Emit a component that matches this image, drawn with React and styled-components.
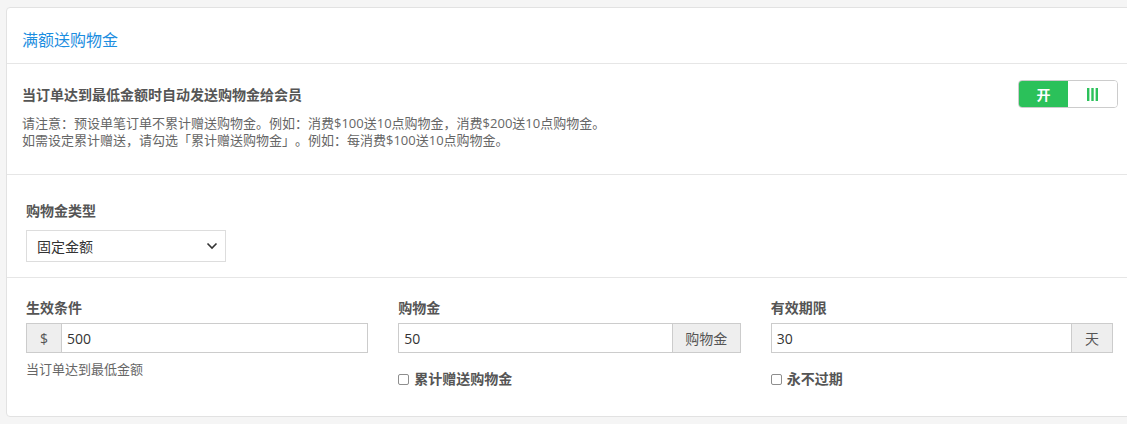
import React from "react";
import styled, { createGlobalStyle } from "styled-components";

const GlobalStyle = createGlobalStyle`
  html, body {
    margin: 0;
    padding: 0;
    background: #f5f5f5;
    overflow: hidden;
  }
  body {
    font-family: "Open Sans", "Noto Sans CJK SC", sans-serif;
    color: #333;
    text-spacing-trim: space-all;
  }
`;

const Page = styled.div`
  padding: 7px 0 0 6px;
  width: 1134px;
  height: 424px;
  box-sizing: border-box;
`;

const Card = styled.div`
  background: #fff;
  border: 1px solid #e2e2e2;
  border-radius: 4px;
  width: 1128px;
  box-sizing: border-box;
`;

const Header = styled.div`
  padding: 22px 15px 13px;
  border-bottom: 1px solid #e6e6e6;
`;

const Title = styled.h2`
  margin: 0;
  font-size: 16px;
  line-height: 20px;
  font-weight: 400;
  color: #1b8de0;
`;

const Section = styled.div`
  padding: ${(p) => p.pad || "20px 20px 16px 19px"};
  border-bottom: ${(p) => (p.last ? "none" : "1px solid #e6e6e6")};
`;

const Row = styled.div`
  display: flex;
  justify-content: space-between;
  align-items: flex-start;
`;

const SettingTitle = styled.div`
  font-size: 14px;
  line-height: 18px;
  font-weight: 700;
  color: #555;
  margin-top: 6px;
`;

const Note = styled.p`
  margin: 11px 0 0;
  font-size: 13px;
  line-height: 17px;
  color: #666;
`;

const Toggle = styled.div`
  display: flex;
  width: 100px;
  height: 28px;
  border: 1px solid #ccc;
  border-radius: 4px;
  overflow: hidden;
  box-sizing: border-box;
`;

const ToggleHalf = styled.div`
  flex: 1;
  display: flex;
  align-items: center;
  justify-content: center;
  font-size: 14px;
  font-weight: 700;
  background: ${(p) => (p.active ? "#2bc15a" : "#fff")};
  color: ${(p) => (p.active ? "#fff" : "#2bc15a")};
`;

const FieldLabel = styled.div`
  font-size: 14px;
  line-height: 20px;
  font-weight: 600;
  color: #555;
  margin-bottom: ${(p) => p.gap || "5px"};
`;

const Select = styled.div`
  width: 200px;
  height: 32px;
  box-sizing: border-box;
  border: 1px solid #ddd;
  display: flex;
  align-items: center;
  justify-content: space-between;
  padding: 0 7px 0 10px;
  font-size: 14px;
  color: #333;
`;

const Grid = styled.div`
  display: grid;
  grid-template-columns: repeat(3, 1fr);
  column-gap: 30px;
  align-items: start;
`;

const InputGroup = styled.div`
  display: flex;
  height: 30px;
  border: 1px solid #ccc;
  box-sizing: border-box;
`;

const Addon = styled.div`
  display: flex;
  align-items: center;
  justify-content: center;
  width: ${(p) => p.w};
  flex: none;
  background: #eee;
  font-size: 14px;
  color: #555;
  border-left: ${(p) => (p.right ? "1px solid #ccc" : "none")};
  border-right: ${(p) => (p.right ? "none" : "1px solid #ccc")};
`;

const Value = styled.div`
  flex: 1;
  display: flex;
  align-items: center;
  padding: 0 5px;
  font-size: 14px;
  color: #333;
`;

const Help = styled.div`
  margin-top: 7px;
  font-size: 13px;
  line-height: 18px;
  color: #666;
`;

const Check = styled.label`
  display: flex;
  align-items: center;
  gap: 5px;
  margin-top: 16px;
  font-size: 14px;
  line-height: 20px;
  font-weight: 700;
  color: #555;
`;

const Box = styled.span`
  width: 11px;
  height: 11px;
  border: 1px solid #8e8e8e;
  border-radius: 2px;
  box-sizing: border-box;
  background: #fff;
`;

const Chevron = () => (
  <svg width="12" height="8" viewBox="0 0 12 8">
    <path d="M1.5 1.5 L6 6 L10.5 1.5" fill="none" stroke="#333" strokeWidth="1.6" />
  </svg>
);

const OffBars = () => (
  <svg width="11" height="13" viewBox="0 0 11 13">
    <rect x="0" y="0" width="2.4" height="13" fill="#2bc15a" />
    <rect x="4.3" y="0" width="2.4" height="13" fill="#2bc15a" />
    <rect x="8.6" y="0" width="2.4" height="13" fill="#2bc15a" />
  </svg>
);

export default function App() {
  return (
    <>
      <GlobalStyle />
      <Page>
        <Card>
          <Header>
            <Title>满额送购物金</Title>
          </Header>

          <Section pad="16px 15px 25px 15px">
            <Row>
              <div>
                <SettingTitle>当订单达到最低金额时自动发送购物金给会员</SettingTitle>
                <Note>
                  请注意：预设单笔订单不累计赠送购物金。例如：消费$100送10点购物金，消费$200送10点购物金。
                  <br />
                  如需设定累计赠送，请勾选「累计赠送购物金」。例如：每消费$100送10点购物金。
                </Note>
              </div>
              <Toggle>
                <ToggleHalf active>开</ToggleHalf>
                <ToggleHalf>
                  <OffBars />
                </ToggleHalf>
              </Toggle>
            </Row>
          </Section>

          <Section pad="26px 20px 15px 19px">
            <FieldLabel gap="9px">购物金类型</FieldLabel>
            <Select>
              固定金额
              <Chevron />
            </Select>
          </Section>

          <Section pad="20px 20px 27px 19px" last>
            <Grid>
              <div>
                <FieldLabel>生效条件</FieldLabel>
                <InputGroup>
                  <Addon w="34px">$</Addon>
                  <Value>500</Value>
                </InputGroup>
                <Help>当订单达到最低金额</Help>
              </div>
              <div>
                <FieldLabel>购物金</FieldLabel>
                <InputGroup>
                  <Value>50</Value>
                  <Addon w="67px" right>购物金</Addon>
                </InputGroup>
                <Check>
                  <Box />
                  累计赠送购物金
                </Check>
              </div>
              <div>
                <FieldLabel>有效期限</FieldLabel>
                <InputGroup>
                  <Value>30</Value>
                  <Addon w="40px" right>天</Addon>
                </InputGroup>
                <Check>
                  <Box />
                  永不过期
                </Check>
              </div>
            </Grid>
          </Section>
        </Card>
      </Page>
    </>
  );
}
